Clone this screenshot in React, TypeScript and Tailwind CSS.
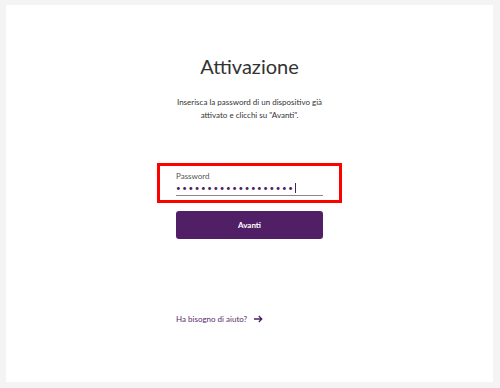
import React from 'react';

export default function App() {
  return (
    <div className="w-[500px] h-[388px] bg-[#f4f4f4] pt-[5px] pl-[6px] pr-[7px] pb-[6px] font-['Lato','Liberation_Sans',sans-serif]">
      <div className="h-full bg-white flex flex-col items-center">
        <h1 className="mt-[48px] text-[20px] leading-[26px] text-[#333333]">Attivazione</h1>
        <p className="mt-[17px] text-[8px] leading-[13px] text-[#333333] text-center">
          Inserisca la password di un dispositivo già
          <br />
          attivato e clicchi su "Avanti".
        </p>

        <div className="mt-[41px] w-[185px] border-[3px] border-[#ff0000] px-[16px] pt-[5px] pb-[4px]">
          <div className="text-[8px] leading-[10px] text-[#555555]">Password</div>
          <div className="h-[15px] flex items-center border-b border-[#888888]">
            <span className="text-[8px] tracking-[1.6px] text-[#4f1f66] leading-none">•••••••••••••••••••</span>
            <span className="w-px h-[10px] bg-[#4f1f66]"></span>
          </div>
        </div>

        <button className="mt-[8px] w-[147px] h-[28px] rounded-[3px] bg-[#511f66] text-white text-[8px] font-bold">
          Avanti
        </button>

        <div className="mt-[74px] w-[147px] flex items-center gap-[7px] text-[8px] text-[#5b2a6e]">
          <span>Ha bisogno di aiuto?</span>
          <svg width="9" height="8" viewBox="0 0 9 8" fill="none" stroke="#4f1f66" strokeWidth="1.3">
            <path d="M0 4h8M4.8 1l3 3-3 3" />
          </svg>
        </div>
      </div>
    </div>
  );
}
